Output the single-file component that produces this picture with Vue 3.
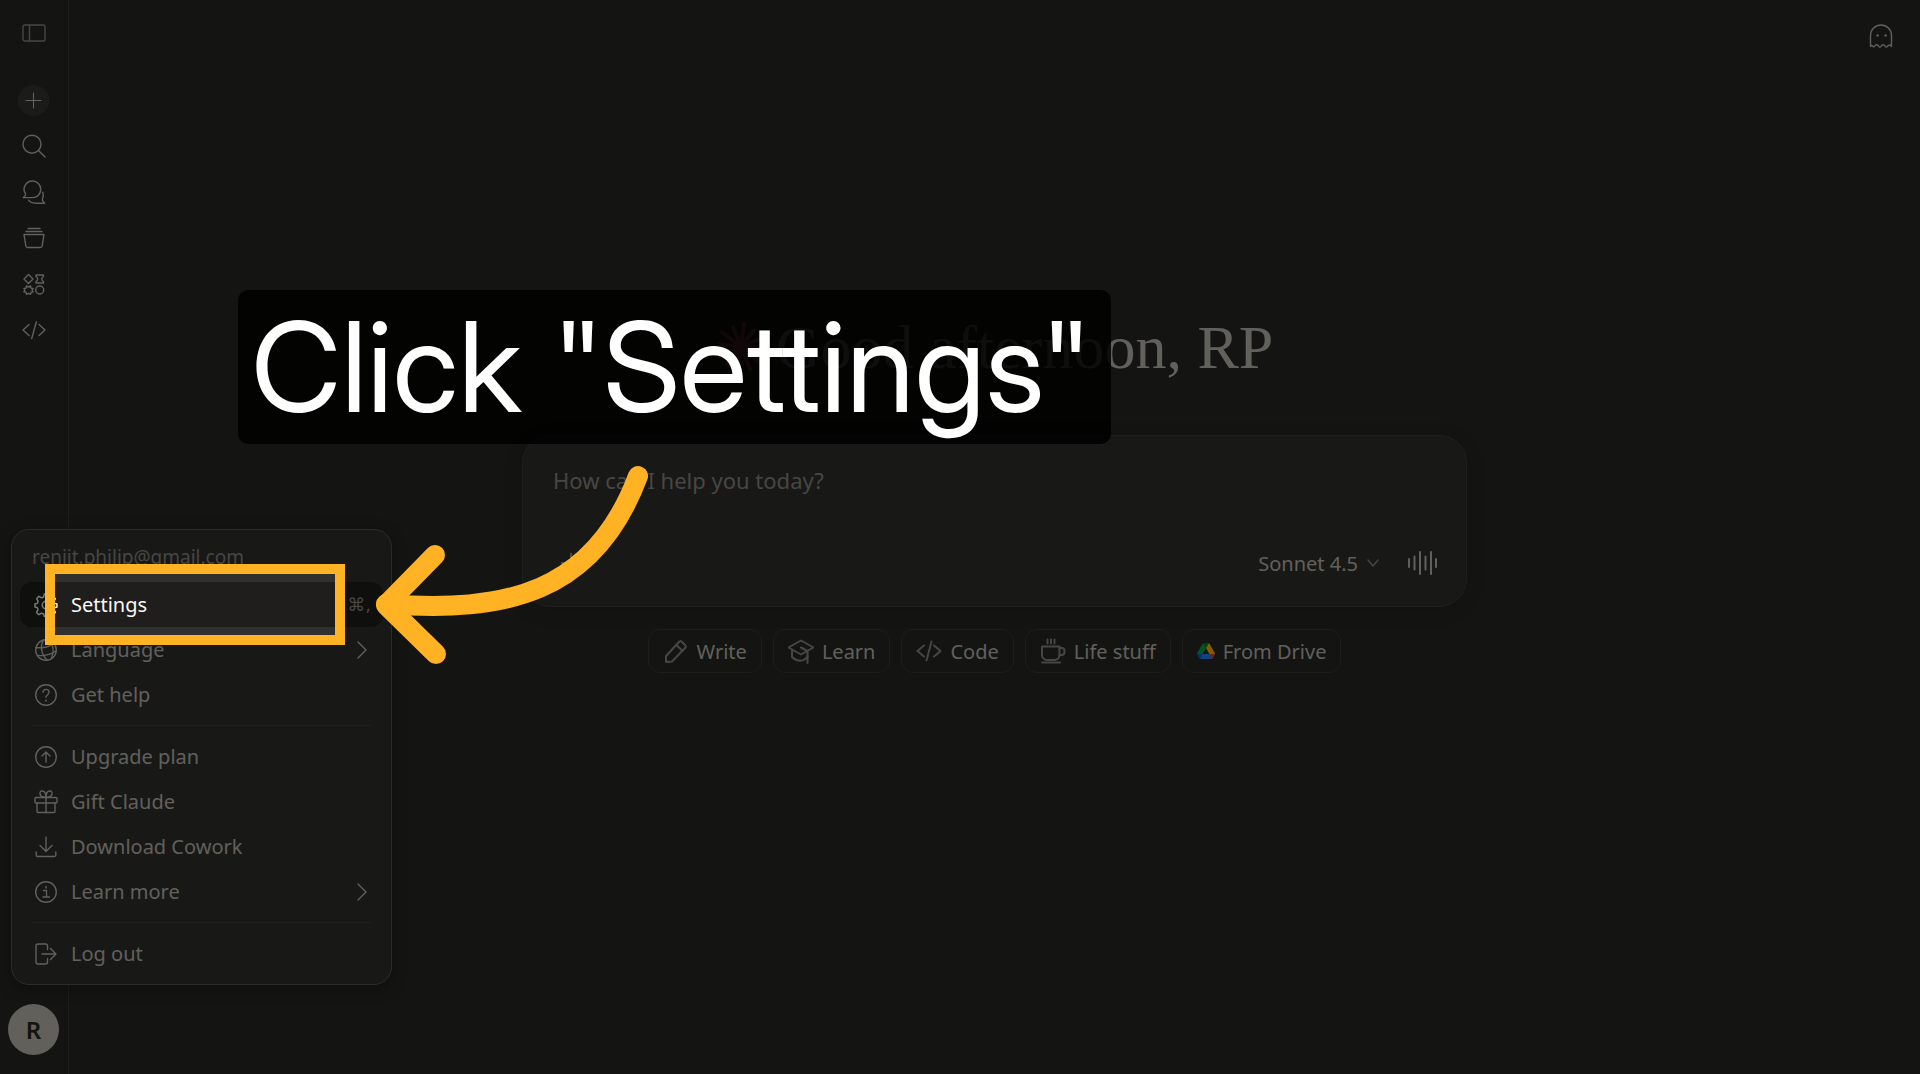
<template>
  <div class="page">
    <aside class="sidebar">
      <nav class="side-nav" aria-label="Main">
        <button
          v-for="item in navItems"
          :key="item.name"
          type="button"
          class="nav-btn"
          :class="item.name"
          :aria-label="item.label"
        >
          <svg width="24" height="24" viewBox="0 0 24 24" class="icon">
            <path v-for="d in item.paths" :key="d" :d="d" />
          </svg>
        </button>
      </nav>
      <button type="button" class="avatar" aria-label="Account">R</button>
    </aside>

    <main class="main">
      <header class="top-bar">
        <button type="button" class="ghost-btn" aria-label="Incognito chat">
          <svg width="24" height="24" viewBox="0 0 24 24" class="icon">
            <path d="M1.500 22.500V11.500a10.500 10.500 0 0 1 21 0v11c-1-2-3-2-4-.2-.7 1-1.500 1-2.200 0-1.200-2-3.200-2-4.300 0-.7 1-1.500 1-2.200 0-1.100-2-3.100-2-4.200-.2-.7 1-1.300 1-2 0-.8-.8-1.500-.8-2.100.2z" />
            <circle cx="8.500" cy="11.500" r="1.200" class="solid" />
            <circle cx="16.500" cy="11.500" r="1.200" class="solid" />
          </svg>
        </button>
      </header>

      <section class="hero">
        <h1 class="greeting">
          <svg width="50" height="50" viewBox="-25 -25 50 50" class="burst">
            <line v-for="r in rays" :key="r.a" x1="0" y1="0" :x2="r.x" :y2="r.y" />
          </svg>
          <span>Good afternoon, RP</span>
        </h1>

        <form class="composer" @submit.prevent>
          <textarea v-model="prompt" rows="1" placeholder="How can I help you today?" aria-label="Message"></textarea>
          <div class="composer-row">
            <button type="button" class="plain-btn add-btn" aria-label="Add files">
              <svg width="24" height="24" viewBox="0 0 24 24" class="icon"><path d="M12 2.500v19M2.500 12h19" /></svg>
            </button>
            <button type="button" class="plain-btn model-btn">
              Sonnet 4.5
              <svg width="14" height="14" viewBox="0 0 14 14" class="icon faint"><path d="M2 4l5 6 5-6" /></svg>
            </button>
            <button type="button" class="plain-btn" aria-label="Voice mode">
              <svg width="32" height="24" viewBox="0 0 32 24" class="icon bars">
                <path d="M3 8v8M8.500 5.500v13M14 1v22M19.500 5.500v13M25 1v22M30 8v8" />
              </svg>
            </button>
          </div>
        </form>

        <div class="chips">
          <button v-for="chip in chips" :key="chip.label" type="button" class="chip">
            <svg v-if="chip.paths" width="26" height="26" viewBox="0 0 26 26" class="icon">
              <path v-for="d in chip.paths" :key="d" :d="d" />
            </svg>
            <svg v-else width="18" height="18" viewBox="0 0 87 78" class="drive">
              <path d="M6.600 66.850l3.850 6.650c.8 1.400 1.950 2.500 3.300 3.300L27.500 53H0c0 1.550.4 3.100 1.200 4.500z" fill="#0066da" />
              <path d="M43.650 25L29.900 1.200c-1.350.8-2.500 1.900-3.300 3.300L1.200 48.500C.4 49.900 0 51.450 0 53h27.500z" fill="#00ac47" />
              <path d="M73.550 76.800c1.350-.8 2.500-1.900 3.300-3.300l9.250-16c.8-1.400 1.200-2.950 1.200-4.500H59.800l5.850 11.500z" fill="#ea4335" />
              <path d="M43.650 25L57.400 1.200C56.050.4 54.500 0 52.900 0H34.400c-1.600 0-3.150.45-4.500 1.200z" fill="#00832d" />
              <path d="M59.800 53H27.500L13.750 76.800c1.350.8 2.900 1.200 4.500 1.200h50.800c1.600 0 3.150-.45 4.500-1.200z" fill="#2684fc" />
              <path d="M73.400 26.500L60.700 4.500c-.8-1.400-1.950-2.500-3.300-3.300L43.650 25 59.800 53h27.450c0-1.550-.4-3.100-1.200-4.500z" fill="#ffba00" />
            </svg>
            {{ chip.label }}
          </button>
        </div>
      </section>
    </main>

    <div class="menu">
      <p class="email">renjit.philip@gmail.com</p>
      <div v-for="(group, g) in menuGroups" :key="g" class="group">
        <div v-for="item in group" :key="item.label" class="row-wrap">
          <button type="button" class="row" :class="{ active: item.active }">
            <svg width="24" height="24" viewBox="0 0 24 24" class="icon">
              <path v-for="d in item.paths" :key="d" :d="d" />
            </svg>
            <span class="row-label">{{ item.label }}</span>
            <kbd v-if="item.keys" class="keys">{{ item.keys }}</kbd>
            <svg v-if="item.sub" width="18" height="18" viewBox="0 0 18 18" class="icon">
              <path d="M5 1l8 8-8 8" />
            </svg>
          </button>
          <!-- spotlight: everything outside the frame is dimmed -->
          <div v-if="item.active" class="spotlight"></div>
        </div>
      </div>
    </div>

    <!-- tutorial callout -->
    <div class="callout">Click "Settings"</div>
    <svg class="arrow" width="290" height="210" viewBox="370 460 290 210">
      <path d="M638 476C594 594 505 613 386 604" />
      <path d="M435 555L386 605l50 49" />
    </svg>
  </div>
</template>

<script setup>
import { ref } from 'vue'

const prompt = ref('')

const codePaths = ['M7 6.500L1 12l6 5.500', 'M17 6.500l6 5.500-6 5.500', 'M14.300 4L9.700 20.500']
const circle = 'M12 1.700a10.300 10.300 0 1 0 0 20.600 10.300 10.300 0 0 0 0-20.600z'

const navItems = [
  { name: 'toggle', label: 'Toggle sidebar', paths: ['M3 4h18a2 2 0 0 1 2 2v12a2 2 0 0 1-2 2H3a2 2 0 0 1-2-2V6a2 2 0 0 1 2-2z', 'M7.500 4v16'] },
  { name: 'new', label: 'New chat', paths: ['M12 2.500v19M2.500 12h19'] },
  { name: 'search', label: 'Search', paths: ['M10 1.200a9 9 0 1 0 0 18 9 9 0 0 0 0-18z', 'M16.500 16.500l6.500 6.500'] },
  {
    name: 'chats',
    label: 'Chats',
    paths: [
      'M10.500 1a8.300 8.300 0 1 1 0 16.600H1.200c2-1.400 2.700-2.500 2.300-3.700A8.300 8.300 0 0 1 10.500 1z',
      'M20.800 12.200c.8 2.600.5 4.700-.4 6.800-.3 1.500.5 2.800 2.400 4.200h-9c-3.500 0-5.800-1-7.300-3'
    ]
  },
  { name: 'projects', label: 'Projects', paths: ['M6 2.500h12M4 5.500h16', 'M2 8.500h20l-1.800 11.200a2 2 0 0 1-2 1.800H5.800a2 2 0 0 1-2-1.800z'] },
  {
    name: 'artifacts',
    label: 'Artifacts',
    paths: [
      'M6.500 2.500L11 7l-4.500 4.500L2 7z',
      'M14 3h7.500v1.500c-2.300 1.200-2.300 3.800 0 5V11H14V9.500c2.300-1.200 2.300-3.800 0-5z',
      'M17.700 14a4 4 0 1 0 0 8 4 4 0 0 0 0-8z',
      'M6.500 15l2-1 .6 2.200 2 .3-1 1.700 1 1.700-2 .4-.6 2-2-1-2 1-.6-2-2-.4 1-1.700-1-1.700 2-.3.600-2.200z'
    ]
  },
  { name: 'code', label: 'Code', paths: codePaths }
]

const chips = [
  { label: 'Write', paths: ['M3 24v-6L16.500 3.500a1.500 1.500 0 0 1 2 0l4 4a1.500 1.500 0 0 1 0 2L9 23.500z', 'M13.500 7l6 6'] },
  { label: 'Learn', paths: ['M13 2.500L.5 9.500 13 16.500l12.500-7z', 'M4 12v7c4.500 4.500 12 5.500 16-1', 'M13 9.500l6.500 3.500v12'] },
  { label: 'Code', paths: ['M8 7.500L1.500 13 8 18.500', 'M18 7.500l6.500 5.500-6.500 5.500', 'M15.500 3.500l-5 19'] },
  {
    label: 'Life stuff',
    paths: [
      'M2 8.500h17.500V17a5 5 0 0 1-5 5H7a5 5 0 0 1-5-5z',
      'M19.500 10h2.500a2.500 2.500 0 0 1 2.500 2.500V14a3 3 0 0 1-3 3h-2',
      'M2 24.500h18',
      'M7.500 1.500v4M11 1.500v4M14.500 1.500v4'
    ]
  },
  { label: 'From Drive' }
]

const menuGroups = [
  [
    {
      label: 'Settings',
      active: true,
      keys: '⇧⌘,',
      paths: [
        'M10.300 1h3.400l.7 3 2 .9 2.700-1.600 2.300 2.400-1.500 2.700.8 2 2.300.6v3l-2.300.7-.8 2 1.500 2.700-2.300 2.300-2.700-1.500-2 .8-.7 2.500h-3.400l-.7-2.500-2-.8-2.700 1.500-2.300-2.300 1.500-2.700-.8-2L1 14v-3l2.300-.6.8-2-1.500-2.700 2.300-2.400 2.700 1.600 2-.9z',
        'M12 8.300a3.800 3.800 0 1 0 0 7.600 3.800 3.800 0 0 0 0-7.600z'
      ]
    },
    {
      label: 'Language',
      sub: true,
      paths: [circle, 'M9.500 2C6 8 7 16 13 22', 'M15 2.300c4.500 5 5.500 11 2.500 17.700', 'M2.200 9.500c7 1 13-.5 17.800-4.500', 'M3.500 17.500c7.500.5 13.500-1 18.500-4.500']
    },
    { label: 'Get help', paths: [circle, 'M9 9.300c.2-4 6.200-3.800 6.100 0-.1 2.500-3.100 2.300-3.100 5', 'M12 17v1.300'] }
  ],
  [
    { label: 'Upgrade plan', paths: [circle, 'M12 17V7.200M8 11l4-4 4 4'] },
    {
      label: 'Gift Claude',
      paths: [
        'M2 7.500h20a1 1 0 0 1 1 1v3.500a1 1 0 0 1-1 1H2a1 1 0 0 1-1-1V8.500a1 1 0 0 1 1-1z',
        'M3 13v8.500a1 1 0 0 0 1 1h16a1 1 0 0 0 1-1V13',
        'M12 7.500v15',
        'M12 7.500C5 7.500 4.500 1 8.200 1 11 1 12 4 12 7.500zM12 7.500c7 0 7.500-6.500 3.800-6.500C13 1 12 4 12 7.500z'
      ]
    },
    { label: 'Download Cowork', paths: ['M12 2v14.500M6 10.500l6 6 6-6', 'M2.200 17v3a1.500 1.500 0 0 0 1.500 1.500h16.600a1.500 1.500 0 0 0 1.500-1.500v-3'] },
    { label: 'Learn more', sub: true, paths: [circle, 'M9.500 10.500h3v6.300M9 17h6.500', 'M12 6.500v1.500'] }
  ],
  [
    {
      label: 'Log out',
      paths: ['M13.500 7.500V4a2 2 0 0 0-2-2H4a2 2 0 0 0-2 2v16a2 2 0 0 0 2 2h7.500a2 2 0 0 0 2-2v-3.500', 'M8 12h14M16.500 6.500L22 12l-5.500 5.500']
    }
  ]
]

// starburst rays
const rays = [24, 22, 24, 21, 23, 24, 21, 24, 22, 24, 21, 23].map((len, i) => {
  const a = i * 30 + 8
  return {
    a,
    x: Math.round(len * Math.cos((a * Math.PI) / 180)),
    y: Math.round(len * Math.sin((a * Math.PI) / 180))
  }
})
</script>

<style>
body {
  margin: 0;
  background: #141413;
}
</style>

<style scoped>
.page {
  position: relative;
  display: flex;
  min-height: 100vh;
  overflow: hidden;
  background: #282826;
  color: #c2c0b6;
  font-family: "Noto Sans", "Open Sans", sans-serif;
  font-size: 20px;
}

button {
  padding: 0;
  border: 0;
  background: none;
  color: inherit;
  font: inherit;
  cursor: pointer;
}

svg {
  flex: none;
}

.icon {
  fill: none;
  stroke: currentColor;
  stroke-width: 1.4;
  stroke-linecap: round;
  stroke-linejoin: round;
}

.icon .solid {
  fill: currentColor;
  stroke: none;
}

/* 侧边栏 */
.sidebar {
  display: flex;
  flex-direction: column;
  align-items: center;
  justify-content: space-between;
  width: 69px;
  padding: 10px 1px 19px 0;
  box-sizing: border-box;
  border-right: 1px solid #3a3a37;
}

.side-nav {
  display: flex;
  flex-direction: column;
}

.nav-btn {
  display: flex;
  align-items: center;
  justify-content: center;
  width: 46px;
  height: 46px;
}

.nav-btn.toggle {
  margin-bottom: 21px;
  color: #8f8d86;
}

.nav-btn.new .icon {
  width: 19px;
  height: 19px;
  padding: 6px;
  border-radius: 50%;
  background: #363633;
}

.avatar {
  width: 51px;
  height: 51px;
  border-radius: 50%;
  background: #c2c0b6;
  color: #262624;
  font-size: 24px;
  font-weight: 600;
}

/* 主区域 */
.main {
  flex: 1;
  min-width: 0;
}

.top-bar {
  display: flex;
  justify-content: flex-end;
  padding: 24px 27px;
}

.ghost-btn {
  display: flex;
}

.hero {
  display: flex;
  flex-direction: column;
  align-items: center;
  padding: 239px 24px 24px;
}

.greeting {
  display: flex;
  align-items: center;
  gap: 10px;
  margin: 0 0 52px;
  font-family: "Liberation Serif", serif;
  font-size: 62px;
  font-weight: 400;
  line-height: 72px;
}

.burst {
  stroke: #d97757;
  stroke-width: 4;
  stroke-linecap: round;
}

.composer {
  width: 100%;
  max-width: 945px;
  padding: 28px 28px 23px 30px;
  box-sizing: border-box;
  border: 1px solid #3e3e3b;
  border-radius: 28px;
  background: #30302e;
  box-shadow: 0 4px 20px rgba(0, 0, 0, 0.1);
}

.composer textarea {
  display: block;
  width: 100%;
  height: 32px;
  margin-bottom: 47px;
  padding: 0;
  border: 0;
  outline: 0;
  resize: none;
  background: none;
  color: #faf9f5;
  font: inherit;
  font-size: 22px;
  line-height: 32px;
}

.composer textarea::placeholder {
  color: #8f8d86;
}

.composer-row {
  display: flex;
  align-items: center;
  height: 40px;
}

.plain-btn {
  display: flex;
  align-items: center;
}

.add-btn {
  margin-left: 6px;
}

.model-btn {
  gap: 8px;
  margin-left: auto;
  margin-right: 26px;
}

.faint {
  color: #8f8d86;
}

.bars {
  stroke-width: 2;
}

.chips {
  display: flex;
  flex-wrap: wrap;
  justify-content: center;
  gap: 11px;
  margin-top: 22px;
}

.chip {
  display: flex;
  align-items: center;
  gap: 8px;
  height: 44px;
  padding: 0 14px;
  box-sizing: border-box;
  border: 1px solid #3a3a37;
  border-radius: 12px;
}

.chip .icon {
  color: #8f8d86;
  stroke-width: 2;
}

/* 账户菜单 */
.menu {
  position: absolute;
  bottom: 89px;
  left: 11px;
  z-index: 10;
  width: 381px;
  padding: 8px;
  box-sizing: border-box;
  border: 1px solid #575752;
  border-radius: 18px;
  background: #30302e;
  box-shadow: 0 4px 16px rgba(0, 0, 0, 0.3);
}

.email {
  margin: 0;
  padding: 0 12px 6px;
  color: #8f8d86;
  font-size: 19px;
  line-height: 38px;
}

.group + .group {
  margin-top: 8px;
  padding-top: 9px;
  background: linear-gradient(#3e3e3b, #3e3e3b) center top / calc(100% - 24px) 1px no-repeat;
}

.row-wrap {
  position: relative;
}

.row {
  display: flex;
  align-items: center;
  gap: 13px;
  width: 100%;
  height: 45px;
  padding: 0 12px 0 14px;
  border-radius: 12px;
  text-align: left;
}

.row.active {
  background: #1f1e1d;
  color: #faf9f5;
}

.row-label {
  flex: 1;
}

.keys {
  color: #8f8d86;
  font-family: "DejaVu Sans", sans-serif;
  font-size: 18px;
}

.spotlight {
  position: absolute;
  top: -18px;
  left: 25px;
  z-index: 2;
  width: 300px;
  height: 81px;
  box-sizing: border-box;
  border: 10px solid #ffb224;
  box-shadow: 0 0 0 4000px rgba(0, 0, 0, 0.5);
  pointer-events: none;
}

.callout {
  position: absolute;
  top: 290px;
  left: 238px;
  z-index: 20;
  padding: 0 20px 0 13px;
  border-radius: 10px;
  background: rgba(0, 0, 0, 0.85);
  color: #ffffff;
  font-family: "Inter Display", Inter, sans-serif;
  font-size: 125px;
  font-variation-settings: "opsz" 32;
  line-height: 154px;
  white-space: nowrap;
}

.arrow {
  position: absolute;
  top: 460px;
  left: 370px;
  z-index: 20;
  fill: none;
  stroke: #ffb224;
  stroke-width: 20;
  stroke-linecap: round;
  stroke-linejoin: round;
  pointer-events: none;
}
</style>
